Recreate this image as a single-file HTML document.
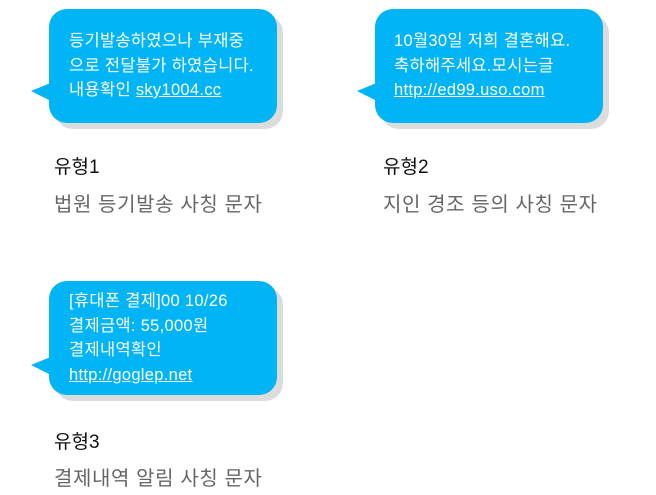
<!DOCTYPE html>
<html><head><meta charset="utf-8"><style>
body{margin:0;width:656px;height:495px;background:#fff;font-family:"Liberation Sans","Noto Sans CJK KR",sans-serif;position:relative;overflow:hidden}
.b{position:absolute;width:228px;height:114px;background:#00b4f5;border-radius:18px;box-shadow:6px 6px 0 #dcdcdc;color:#fff;font-size:16.5px;line-height:24.5px;box-sizing:border-box;padding:20px 0 0 20px;letter-spacing:0.3px;word-spacing:0;white-space:nowrap}
.t{position:absolute;width:22px;height:20px}
.b u{text-decoration:underline}
.h{position:absolute;font-size:19px;color:#111}
.s{position:absolute;font-size:20px;color:#666;letter-spacing:0.6px;word-spacing:0}
</style></head><body>
<svg class="t" style="left:31px;top:82px" viewBox="0 0 22 20"><path d="M0 9 L22 0 L22 20 Z" fill="#00b4f5"/></svg>
<div class="b" style="left:49px;top:9px">등기발송하였으나 부재중<br>으로 전달불가 하였습니다.<br>내용확인 <u>sky1004.cc</u></div>
<div class="h" style="left:54px;top:152px">유형1</div>
<div class="s" style="left:54px;top:188px">법원 등기발송 사칭 문자</div>

<svg class="t" style="left:357px;top:82px" viewBox="0 0 22 20"><path d="M0 9 L22 0 L22 20 Z" fill="#00b4f5"/></svg>
<div class="b" style="left:375px;top:9px;padding-left:19px">10월30일 저희 결혼해요.<br>축하해주세요.모시는글<br><u>http://ed99.uso.com</u></div>
<div class="h" style="left:383px;top:152px">유형2</div>
<div class="s" style="left:383px;top:188px">지인 경조 등의 사칭 문자</div>

<svg class="t" style="left:31px;top:356px" viewBox="0 0 22 20"><path d="M0 9 L22 0 L22 20 Z" fill="#00b4f5"/></svg>
<div class="b" style="left:49px;top:281px;padding-top:8px">[휴대폰 결제]00 10/26<br>결제금액: 55,000원<br>결제내역확인<br><u>http://goglep.net</u></div>
<div class="h" style="left:54px;top:427px">유형3</div>
<div class="s" style="left:54px;top:462px">결제내역 알림 사칭 문자</div>
</body></html>
